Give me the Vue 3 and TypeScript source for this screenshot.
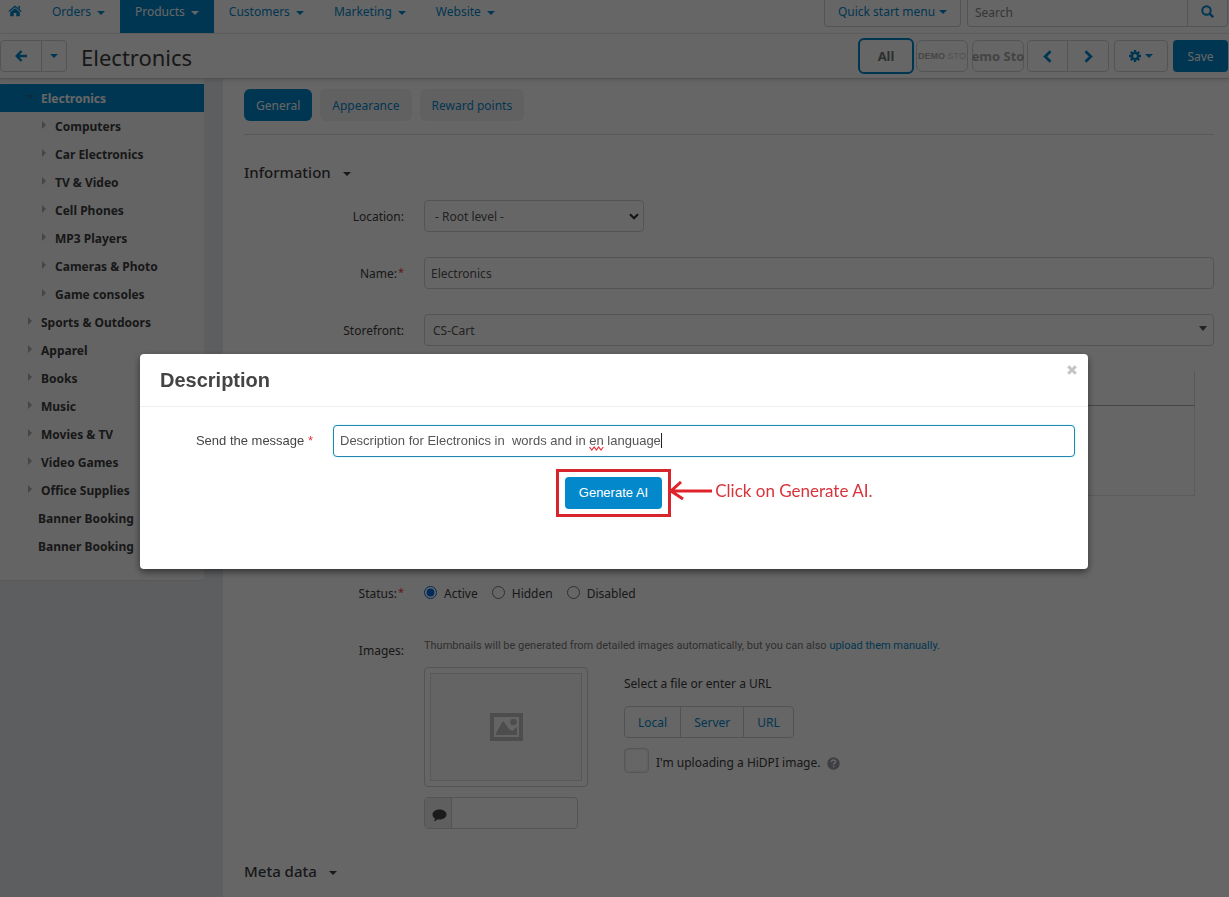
<script setup lang="ts">
import { ref } from 'vue'

interface NavItem { label: string; active?: boolean }
interface Category { label: string; level: 'root' | 'child' | 'plain'; active?: boolean }

const navItems: NavItem[] = [
  { label: 'Orders' },
  { label: 'Products', active: true },
  { label: 'Customers' },
  { label: 'Marketing' },
  { label: 'Website' },
]

const categories: Category[] = [
  { label: 'Electronics', level: 'root', active: true },
  { label: 'Computers', level: 'child' },
  { label: 'Car Electronics', level: 'child' },
  { label: 'TV & Video', level: 'child' },
  { label: 'Cell Phones', level: 'child' },
  { label: 'MP3 Players', level: 'child' },
  { label: 'Cameras & Photo', level: 'child' },
  { label: 'Game consoles', level: 'child' },
  { label: 'Sports & Outdoors', level: 'root' },
  { label: 'Apparel', level: 'root' },
  { label: 'Books', level: 'root' },
  { label: 'Music', level: 'root' },
  { label: 'Movies & TV', level: 'root' },
  { label: 'Video Games', level: 'root' },
  { label: 'Office Supplies', level: 'root' },
  { label: 'Banner Booking', level: 'plain' },
  { label: 'Banner Booking', level: 'plain' },
]

const tabs = ['General', 'Appearance', 'Reward points']
const statuses = ['Active', 'Hidden', 'Disabled']
const sources = ['Local', 'Server', 'URL']

const activeTab = ref('General')
const status = ref('Active')
const name = ref('Electronics')
const message = ref('Description for Electronics in  words and in en language')
</script>

<template>
  <div class="page">
    <header class="topbar">
      <a href="#" class="home" aria-label="Home">
        <svg width="14" height="12" viewBox="0 0 14 12"><path fill="currentColor" d="M7 .5 13.6 6l-.9 1L7 2.300 1.300 7l-.9-1zM10.300.9h1.700v3.200l-1.700-1.400zM7 3.300l4.800 4v3.900H8.300V8H5.700v3.200H2.200V7.300z" /></svg>
      </a>
      <nav class="nav">
        <a v-for="item in navItems" :key="item.label" href="#" class="nav-link" :class="{ active: item.active }">{{ item.label }}<i class="caret"></i></a>
      </nav>
      <button type="button" class="quick">Quick start menu<i class="caret tight"></i></button>
      <form class="search" @submit.prevent>
        <input type="text" placeholder="Search" aria-label="Search" />
        <button type="submit" aria-label="Find">
          <svg width="13" height="13" viewBox="0 0 13 13" fill="none" stroke="currentColor" stroke-width="2"><circle cx="5.500" cy="5.500" r="4.200" /><path d="m8.600 8.600 3.600 3.600" stroke-width="2.400" /></svg>
        </button>
      </form>
    </header>

    <div class="actions">
      <div class="group">
        <button type="button" class="btn back" aria-label="Back">
          <svg width="12" height="12" viewBox="0 0 12 12" fill="none" stroke="currentColor" stroke-width="2.400"><path d="M6.500 1 1.700 6l4.800 5M2 6h10" /></svg>
        </button>
        <button type="button" class="btn more" aria-label="Recent pages"><i class="caret alone"></i></button>
      </div>
      <h1>Electronics</h1>
      <button type="button" class="store all">All</button>
      <button type="button" class="store demo"><span><b>DEMO</b> STO</span></button>
      <button type="button" class="store second"><span>emo Sto</span></button>
      <div class="group pager">
        <button type="button" class="btn" aria-label="Previous">
          <svg width="9" height="13" viewBox="0 0 9 13" fill="none" stroke="currentColor" stroke-width="2.800"><path d="M7.500 1.200 2.200 6.500l5.300 5.300" /></svg>
        </button>
        <button type="button" class="btn" aria-label="Next">
          <svg width="9" height="13" viewBox="0 0 9 13" fill="none" stroke="currentColor" stroke-width="2.800"><path d="m1.500 1.200 5.300 5.300-5.300 5.300" /></svg>
        </button>
      </div>
      <button type="button" class="btn gear" aria-label="Settings">
        <svg width="12" height="12" viewBox="-6 -6 12 12"><g fill="none" stroke="currentColor"><circle r="3.100" stroke-width="2.400" /><path stroke-width="2.400" d="M0-3.500V-6M0 3.500V6M3.500 0H6M-3.500 0H-6M2.500-2.500l1.700-1.700M-2.500 2.500l-1.700 1.700M2.500 2.500l1.700 1.700M-2.500-2.500l-1.700-1.700" /></g></svg>
        <i class="caret tight"></i>
      </button>
      <button type="button" class="save">Save</button>
    </div>

    <div class="columns">
      <aside class="sidebar">
        <ul>
          <li v-for="(c, i) in categories" :key="i" :class="[c.level, { active: c.active }]">
            <i v-if="c.level !== 'plain'" class="twisty"></i><a href="#">{{ c.label }}</a>
          </li>
        </ul>
      </aside>

      <main class="content">
        <div class="tabs">
          <button v-for="t in tabs" :key="t" type="button" :class="{ active: t === activeTab }" @click="activeTab = t">{{ t }}</button>
        </div>

        <h2>Information<i class="caret"></i></h2>

        <div class="form">
          <div class="row">
            <label for="location">Location:</label>
            <div class="select short">
              <select id="location"><option>- Root level -</option></select>
              <svg width="10" height="7" viewBox="0 0 10 7" fill="none" stroke="#333" stroke-width="2.200"><path d="m1 1.200 4 4 4-4" /></svg>
            </div>
          </div>
          <div class="row">
            <label for="name">Name:<sup>*</sup></label>
            <input id="name" v-model="name" type="text" class="field" />
          </div>
          <div class="row">
            <label for="storefront">Storefront:</label>
            <div class="select wide">
              <select id="storefront"><option>CS-Cart</option></select>
              <svg width="8" height="5" viewBox="0 0 8 5"><path fill="#555" d="M0 0h8L4 5z" /></svg>
            </div>
          </div>
          <div class="row editor-row">
            <div class="editor">
              <div class="editor-bar"></div>
              <textarea aria-label="Description text"></textarea>
            </div>
          </div>
          <div class="row" role="radiogroup" aria-labelledby="status-label">
            <span id="status-label" class="label">Status:<sup>*</sup></span>
            <div class="radios">
              <label v-for="s in statuses" :key="s"><input v-model="status" type="radio" name="status" :value="s" />{{ s }}</label>
            </div>
          </div>
          <div class="row">
            <span class="label">Images:</span>
            <div class="images">
              <p class="hint">Thumbnails will be generated from detailed images automatically, but you can also <a href="#">upload them manually.</a></p>
              <div class="uploader">
                <div class="preview">
                  <div class="thumb">
                    <div class="thumb-inner">
                      <svg width="33" height="28" viewBox="0 0 33 28" fill="#c0c0c0"><path fill-rule="evenodd" d="M0 0h33v28H0zM4 4v20h25V4z" /><path d="m6 22 0-2 7-12 6 8 3 2 5-4v8z" /><circle cx="23.500" cy="9" r="3.300" /></svg>
                    </div>
                  </div>
                  <div class="alt">
                    <span>
                      <svg width="15" height="13" viewBox="0 0 15 13"><path fill="#444" d="M7.500.5C11.500.5 14.500 2.800 14.500 5.500S11.500 10.500 7.500 10.500c-.7 0-1.300 0-1.900-.2-1.100 1.100-2.500 1.900-4 2 .8-.8 1.300-1.800 1.300-2.900C1.400 8.500.5 7.100.5 5.500.5 2.800 3.500.5 7.500.5z" /></svg>
                    </span>
                    <input type="text" aria-label="Alternative text" />
                  </div>
                </div>
                <div class="upload">
                  <p>Select a file or enter a URL</p>
                  <div class="sources">
                    <button v-for="s in sources" :key="s" type="button">{{ s }}</button>
                  </div>
                  <div class="hidpi">
                    <input id="hidpi" type="checkbox" />
                    <label for="hidpi">I'm uploading a HiDPI image.</label>
                    <svg width="13" height="13" viewBox="0 0 13 13"><circle cx="6.500" cy="6.500" r="6.200" fill="#9a9dac" /><path fill="none" stroke="#fff" stroke-width="1.700" d="M4.400 5c0-1.300.9-2 2.100-2s2.100.7 2.100 1.800c0 1.300-2 1.300-2 2.900" /><path fill="#fff" d="M5.700 8.700h1.800v1.600H5.700z" /></svg>
                  </div>
                </div>
              </div>
            </div>
          </div>
        </div>

        <h2>Meta data<i class="caret"></i></h2>
      </main>
    </div>
  </div>

  <div class="backdrop">
    <section class="modal" role="dialog" aria-labelledby="modal-title">
      <header>
        <h3 id="modal-title">Description</h3>
        <button type="button" class="close" aria-label="Close">
          <svg width="10" height="10" viewBox="0 0 10 10" stroke="#c4c4c4" stroke-width="3"><path d="m1.200 1.200 7.600 7.600M8.800 1.200 1.200 8.800" /></svg>
        </button>
      </header>
      <div class="modal-body">
        <div class="message">
          <label for="message">Send the message <em>*</em></label>
          <div class="message-field">
            <input id="message" v-model="message" type="text" />
            <svg class="squiggle" width="15" height="5" viewBox="0 0 15 5" fill="none" stroke="#e5343d" stroke-width="1.200"><path d="m.5 1 2.300 3 2.300-3 2.300 3 2.300-3L12 4l2.300-3" /></svg>
            <i class="cursor"></i>
          </div>
        </div>
        <div class="generate">
          <div class="target">
            <button type="button">Generate AI</button>
            <div class="frame"></div>
            <div class="callout">
              <svg width="44" height="20" viewBox="0 0 44 20" fill="none" stroke="#e0222b" stroke-width="3"><path d="M2 10h41M12 1 2 10l12 8" /></svg>
              <span>Click on Generate AI.</span>
            </div>
          </div>
        </div>
      </div>
    </section>
  </div>
</template>

<style>
body {
  background: #eaecf2;
}
</style>

<style scoped>
.page,
.page button,
.page input,
.page select {
  font-family: "Noto Sans", "Open Sans", sans-serif;
  font-size: 12px;
}
.page {
  display: flex;
  flex-direction: column;
  min-height: 100vh;
  color: #3c3c3c;
  line-height: 20px;
  background: #e8ebf0;
}
.page *,
.modal * {
  box-sizing: border-box;
}
a {
  color: #0388cc;
  text-decoration: none;
}
button {
  cursor: pointer;
}
.caret {
  display: inline-block;
  margin-left: 6px;
  vertical-align: middle;
  border: 4px solid transparent;
  border-top-color: currentColor;
  border-bottom: 0;
}
.caret.tight {
  margin-left: 4px;
}
.caret.alone {
  margin-left: 0;
}

.topbar {
  display: flex;
  align-items: flex-start;
  height: 34px;
  background: #fff;
  border-bottom: 1px solid #f1f1f1;
}
.home {
  display: flex;
  padding: 5px 15px 0 8px;
}
.nav {
  display: flex;
  flex: 1;
  height: 33px;
}
.nav-link {
  padding: 2px 15px 0;
}
.nav-link.active {
  color: #fff;
  background: #0388cc;
}
.quick {
  height: 27px;
  width: 137px;
  margin-right: 6px;
  padding: 0 0 4px;
  color: #0388cc;
  background: #fff;
  border: 1px solid #d0d2d6;
  border-top: 0;
  border-radius: 0 0 4px 4px;
}
.search {
  display: flex;
  width: 261px;
  height: 27px;
  margin-right: 1px;
  border: 1px solid #d0d2d6;
  border-top: 0;
  border-radius: 0 0 4px 4px;
}
.search input {
  flex: 1;
  min-width: 0;
  padding: 0 7px 2px;
  background: none;
  border: 0;
}
.search input::placeholder {
  color: #888;
}
.search button {
  width: 40px;
  padding: 0 0 3px;
  color: #0388cc;
  background: none;
  border: 0;
  border-left: 1px solid #d0d2d6;
}
.search svg {
  display: block;
  margin: 0 auto;
}

.actions {
  position: relative;
  display: flex;
  align-items: center;
  height: 45px;
  padding-right: 1px;
  background: #fff;
  border-bottom: 1px solid #ccc;
  box-shadow: 0 1px 4px rgba(0, 0, 0, 0.15);
}
.group {
  display: flex;
}
.btn {
  display: flex;
  align-items: center;
  justify-content: center;
  width: 42px;
  height: 32px;
  padding: 0;
  color: #0388cc;
  background: #fff;
  border: 1px solid #d0d2d6;
  border-radius: 4px;
}
.group .btn:first-child {
  border-radius: 4px 0 0 4px;
}
.group .btn:last-child {
  margin-left: -1px;
  border-radius: 0 4px 4px 0;
}
.btn.more {
  width: 26px;
}
h1 {
  flex: 1;
  margin: 0 0 0 14px;
  padding-top: 2px;
  font-size: 22px;
  font-weight: 400;
  line-height: 32px;
}
.page .store {
  display: flex;
  align-items: center;
  justify-content: center;
  width: 52px;
  height: 32px;
  padding: 0;
  color: #aaa;
  white-space: nowrap;
  background: #fff;
  border: 1px solid #d0d2d6;
  border-radius: 6px;
}
.page .store.all {
  width: 56px;
  height: 36px;
  margin-right: 2px;
  font-size: 13px;
  font-weight: 700;
  color: #777;
  border: 2px solid #0388cc;
}
.page .store.demo {
  margin-right: 4px;
  font-family: "Liberation Sans", sans-serif;
  font-size: 9px;
  color: #ccc;
}
.store.demo b {
  color: #b0b0b0;
}
.page .store.second {
  margin-right: 3px;
  font-family: "Open Sans", sans-serif;
  font-size: 13px;
  font-weight: 700;
}
.pager {
  margin-right: 5px;
}
.pager .btn {
  width: 41px;
}
.pager .btn:last-child {
  width: 42px;
}
.btn.gear {
  width: 54px;
  margin-right: 5px;
}
.save {
  width: 55px;
  height: 32px;
  padding: 0;
  color: #fff;
  background: #0388cc;
  border: 0;
  border-radius: 4px;
}

.columns {
  display: flex;
  flex: 1;
  align-items: flex-start;
}
.sidebar {
  width: 204px;
  padding: 5px 0 20px;
  background: #fafafa;
  border-bottom: 1px solid #ddd;
  border-radius: 0 0 4px 0;
}
.sidebar ul {
  margin: 0;
  padding: 0;
  list-style: none;
}
.sidebar li {
  display: flex;
  align-items: center;
  height: 28px;
  padding: 2px 0 0 28px;
}
.sidebar li.child {
  padding-left: 42px;
}
.sidebar li.plain {
  padding-left: 38px;
}
.sidebar a {
  font-weight: 700;
  color: #3c3c3c;
}
.twisty {
  width: 4px;
  margin: 0 9px 4px 0;
  border: 4px solid transparent;
  border-right: 0;
  border-left-color: #b0b0b0;
}
.sidebar li.active {
  padding-left: 26px;
  background: #0388cc;
}
.sidebar li.active a {
  color: #fff;
}
.active .twisty {
  width: 8px;
  margin-right: 7px;
  border: 4px solid transparent;
  border-top-color: #1a6f9c;
  border-bottom: 0;
}

.content {
  flex: 1;
  align-self: stretch;
  min-width: 0;
  margin-left: 19px;
  padding: 10px 15px 0 21px;
  background: #fff;
}
.tabs {
  display: flex;
  gap: 8px;
  padding-bottom: 13px;
  border-bottom: 1px solid #ddd;
}
.tabs button {
  height: 32px;
  padding: 0 12px;
  color: #0388cc;
  background: #f5f2f5;
  border: 0;
  border-radius: 6px;
}
.tabs button.active {
  color: #fff;
  background: #0388cc;
}
h2 {
  margin: 27px 0 0;
  font-size: 15px;
  font-weight: 500;
  line-height: 20px;
}
h2 .caret {
  margin-left: 12px;
}
.form {
  display: flex;
  flex-direction: column;
  gap: 25px;
  padding: 18px 0 5px;
}
.row {
  display: flex;
  align-items: flex-start;
}
.row > label,
.row > .label {
  width: 160px;
  height: 32px;
  margin-right: 20px;
  padding-top: 1px;
  line-height: 32px;
  text-align: right;
}
sup {
  margin-left: 1px;
  font-size: 11px;
  line-height: 0;
  vertical-align: 2px;
  color: #ee4444;
}
.field,
.select {
  flex: 1;
  height: 32px;
  color: #555;
  background: #fff;
  border: 1px solid #d0d2d6;
  border-radius: 4px;
}
.field {
  min-width: 0;
  padding: 0 6px;
}
.select {
  display: grid;
  align-items: center;
  justify-items: end;
}
.select > * {
  grid-area: 1 / 1;
}
.select select {
  width: 100%;
  height: 30px;
  padding: 0 8px;
  color: #555;
  appearance: none;
  background: none;
  border: 0;
}
.select svg {
  margin-right: 4px;
  pointer-events: none;
}
.select.short {
  flex: 0 0 220px;
}
.select.short select {
  padding-left: 10px;
}
.select.wide svg {
  margin: 0 6px 4px 0;
}
.editor-row {
  min-height: 181px;
  padding: 0 19px 0 180px;
}
.editor {
  flex: 1;
}
.editor-bar {
  height: 35px;
  border: 1px solid #ddd;
  border-top: 0;
  border-bottom-color: #aaa;
}
.editor textarea {
  display: block;
  width: 100%;
  height: 90px;
  resize: none;
  background: #fff;
  border: 1px solid #e6e6e6;
  border-top: 0;
}
.radios {
  display: flex;
  gap: 14px;
  height: 32px;
  padding-top: 1px;
}
.radios label {
  display: flex;
  align-items: center;
}
.radios input {
  width: 13px;
  height: 13px;
  margin: 0 7px 2px 0;
  accent-color: #0069e0;
}
.images {
  flex: 1;
}
.hint {
  margin: 2px 0 12px;
  font-family: Roboto, sans-serif;
  font-size: 11px;
  line-height: 19px;
  color: #777;
}
.uploader {
  display: flex;
  gap: 36px;
}
.preview {
  width: 164px;
}
.thumb {
  padding: 5px;
  border: 1px solid #d0d2d6;
  border-radius: 4px;
}
.thumb-inner {
  display: flex;
  align-items: center;
  justify-content: center;
  height: 108px;
  background: #fafafa;
  border: 1px solid #ddd;
}
.alt {
  display: flex;
  width: 154px;
  height: 32px;
  margin-top: 10px;
  border: 1px solid #d0d2d6;
  border-radius: 4px;
}
.alt span {
  display: flex;
  align-items: center;
  justify-content: center;
  width: 27px;
  padding: 4px 0 0 3px;
  background: #eee;
  border-right: 1px solid #d0d2d6;
}
.alt input {
  flex: 1;
  min-width: 0;
  background: none;
  border: 0;
}
.upload p {
  margin: 7px 0 12px;
}
.sources {
  display: flex;
}
.sources button {
  height: 32px;
  margin-right: -1px;
  padding: 0 13px;
  color: #0388cc;
  background: #fff;
  border: 1px solid #c8d0d8;
}
.sources button:first-child {
  border-radius: 4px 0 0 4px;
}
.sources button:last-child {
  border-radius: 0 4px 4px 0;
}
.hidpi {
  display: flex;
  align-items: center;
  margin-top: 10px;
}
.hidpi input {
  width: 25px;
  height: 25px;
  margin: 0 7px 0 0;
  appearance: none;
  border: 1px solid #d8d8d8;
  border-radius: 4px;
  box-shadow: inset 0 0 3px #ddd;
}
.hidpi label {
  padding-top: 5px;
}
.hidpi svg {
  margin: 5px 0 0 6px;
}

.backdrop {
  position: fixed;
  inset: 0;
  display: flex;
  align-items: flex-start;
  justify-content: center;
  padding: 354px 141px 0 140px;
  font-family: "Liberation Sans", Arial, sans-serif;
  font-size: 13px;
  line-height: 20px;
  color: #444;
  background: rgba(0, 0, 0, 0.6);
}
.modal {
  flex: 1;
  background: #fff;
  border-radius: 4px;
  box-shadow: 0 3px 7px rgba(0, 0, 0, 0.5);
}
.modal header {
  display: flex;
  align-items: flex-start;
  justify-content: space-between;
  padding: 11px 11px 11px 20px;
  border-bottom: 1px solid #eee;
}
h3 {
  margin: 0;
  font-size: 20px;
  line-height: 30px;
}
.close {
  display: flex;
  padding: 0;
  background: none;
  border: 0;
}
.modal-body {
  padding: 18px 13px 60px 20px;
}
.message {
  display: flex;
  align-items: center;
}
.message label {
  width: 153px;
  margin-right: 20px;
  text-align: right;
}
.message em {
  font-style: normal;
  color: #ee3344;
}
.message-field {
  position: relative;
  flex: 1;
}
.message input {
  display: block;
  width: 100%;
  height: 32px;
  padding: 0 6px 2px;
  font-family: inherit;
  font-size: 13px;
  color: #555;
  border: 1px solid #2585ad;
  border-radius: 4px;
  box-shadow: 0 0 2px #a0f0f4;
}
.squiggle {
  position: absolute;
  top: 21px;
  left: 256px;
}
.cursor {
  position: absolute;
  top: 8px;
  left: 328px;
  width: 1px;
  height: 15px;
  background: #222;
}
.generate {
  display: flex;
  justify-content: center;
  margin: 20px 8px 0 0;
}
.target {
  position: relative;
}
.target button {
  display: block;
  height: 32px;
  padding: 0 14px 2px;
  font-family: inherit;
  font-size: 13px;
  color: #fff;
  background: #0388cc;
  border: 0;
  border-radius: 4px;
}
.frame {
  position: absolute;
  inset: -8px -9px;
  pointer-events: none;
  border: 3px solid #d8242c;
}
.callout {
  position: absolute;
  top: 2px;
  left: 100%;
  display: flex;
  align-items: center;
  gap: 2px;
  padding-left: 7px;
  font-family: Lato, sans-serif;
  font-size: 17px;
  line-height: 24px;
  color: #d8343c;
  white-space: nowrap;
}
</style>
